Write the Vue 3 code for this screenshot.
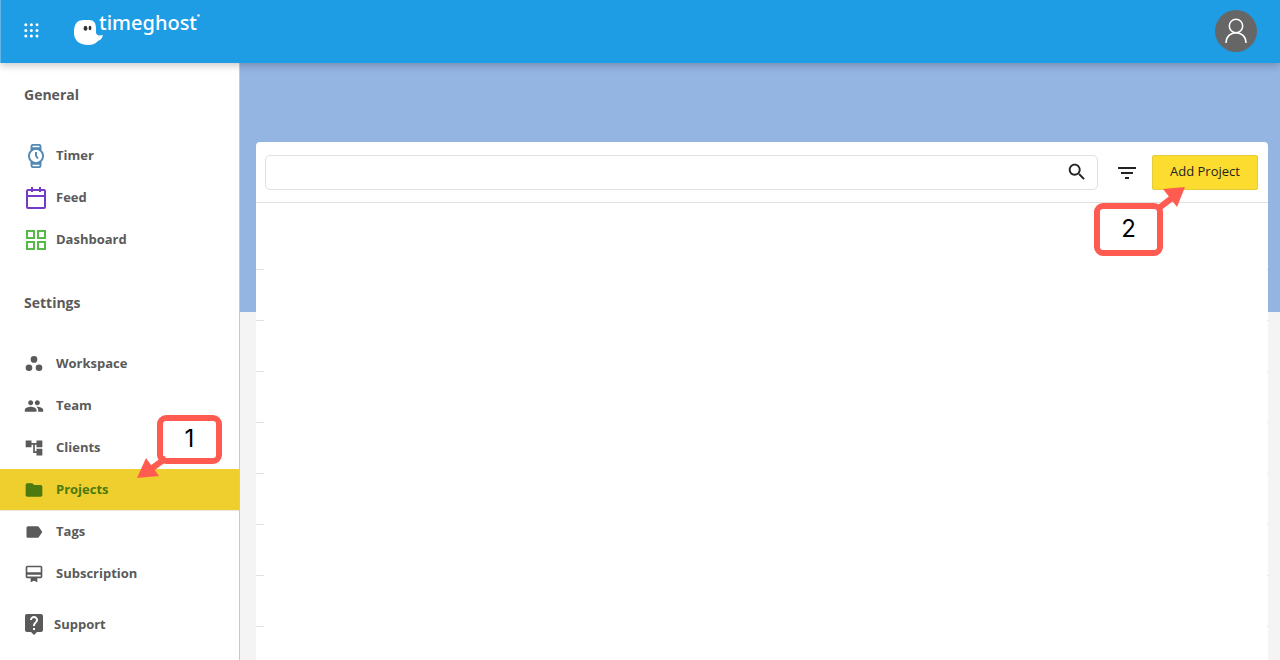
<script setup>
import { ref } from 'vue'

const query = ref('')

const general = [
  { label: 'Timer', icon: 'timer' },
  { label: 'Feed', icon: 'feed' },
  { label: 'Dashboard', icon: 'dashboard' },
]

const settings = [
  { label: 'Workspace', path: 'M12 2.5a4 4 0 1 0 0 8a4 4 0 1 0 0-8zM6 12.5a4 4 0 1 0 0 8a4 4 0 1 0 0-8zM18 12.5a4 4 0 1 0 0 8a4 4 0 1 0 0-8z' },
  { label: 'Team', path: 'M16 11c1.66 0 2.99-1.34 2.99-3S17.66 5 16 5c-1.66 0-3 1.34-3 3s1.34 3 3 3zm-8 0c1.66 0 2.99-1.34 2.99-3S9.66 5 8 5C6.34 5 5 6.34 5 8s1.34 3 3 3zm0 2c-2.33 0-7 1.17-7 3.5V19h14v-2.5c0-2.33-4.67-3.5-7-3.5zm8 0c-.29 0-.62.02-.97.05 1.16.84 1.97 1.97 1.97 3.45V19h6v-2.5c0-2.33-4.67-3.5-7-3.5z' },
  { label: 'Clients', path: 'M22 11V3h-7v3H9V3H2v8h7V8h2v10h4v3h7v-8h-7v3h-2V8h2v3z' },
  { label: 'Projects', active: true, path: 'M10 4H4c-1.1 0-1.99.9-1.99 2L2 18c0 1.1.9 2 2 2h16c1.1 0 2-.9 2-2V8c0-1.1-.9-2-2-2h-8l-2-2z' },
  { label: 'Tags', path: 'M17.63 5.84C17.27 5.33 16.67 5 16 5L5 5.01C3.9 5.01 3 5.9 3 7v10c0 1.1.9 1.99 2 1.99L16 19c.67 0 1.27-.33 1.63-.84L22 12l-4.37-6.16z' },
  { label: 'Subscription', path: 'M20 2H4c-1.11 0-2 .89-2 2v11c0 1.11.89 2 2 2h4v5l4-2 4 2v-5h4c1.11 0 2-.89 2-2V4c0-1.11-.89-2-2-2zm0 13H4v-2h16v2zm0-5H4V4h16v6z' },
]
</script>

<template>
  <div class="app">
    <header class="topbar">
      <button class="bare" type="button" aria-label="Apps">
        <svg width="15" height="15" viewBox="0 0 15 15" fill="#fff">
          <template v-for="r in 3" :key="r">
            <circle v-for="c in 3" :key="c" :cx="c * 5.6 - 3.8" :cy="r * 5.6 - 3.8" r="1.5" />
          </template>
        </svg>
      </button>
      <a class="brand" href="#">
        <svg class="ghost" width="30" height="27" viewBox="0 0 30 27">
          <path fill="#fff" d="M0 14C0 5 2.500 1 10 1H15C20 1 22 4 22 9V13C22 16 24 17 29 16C28 20 26 21 24 22C21 25 18 26 14 26C5 26 0 21 0 14Z" />
          <ellipse cx="11.500" cy="9.300" rx="1.900" ry="2.500" fill="#333" />
          <ellipse cx="16" cy="9" rx="1.400" ry="2.200" fill="#333" />
        </svg>
        <span class="wordmark">timeghost</span>
        <svg class="mark" width="3" height="3" viewBox="0 0 3 3"><circle cx="1.500" cy="1.500" r="1.200" fill="#fff" /></svg>
      </a>
      <button class="avatar" type="button" aria-label="Account">
        <svg width="24" height="26" viewBox="0 0 24 26" fill="none" stroke="#fff" stroke-width="1.500">
          <circle cx="12" cy="8" r="6.700" />
          <path d="M2 25C2 18.500 6.500 14.700 12 14.700S22 18.500 22 25" />
        </svg>
      </button>
    </header>

    <div class="body">
      <nav class="sidebar">
        <h2>General</h2>
        <ul>
          <li v-for="item in general" :key="item.label">
            <a class="item big" href="#">
              <svg v-if="item.icon === 'timer'" width="24" height="24" viewBox="0 0 24 24" fill="none" stroke="#5289b5" stroke-width="1.900">
                <circle cx="12" cy="12" r="7.100" />
                <path d="M7.500 6V2.500Q7.500 .9 9 .9H15Q16.500 .9 16.500 2.500V6M7.500 18V21.500Q7.500 23.100 9 23.100H15Q16.500 23.100 16.500 21.500V18M8 4.200H16M8 19.800H16" />
                <path d="M12 8V12L14 14.500" />
              </svg>
              <svg v-else-if="item.icon === 'feed'" width="24" height="24" viewBox="0 0 24 24" fill="none" stroke="#743bc7" stroke-width="2">
                <rect x="3" y="4" width="18" height="18" rx="1" />
                <path d="M3 10H21M8 1V6M16 1V6" />
              </svg>
              <svg v-else width="24" height="24" viewBox="0 0 24 24" fill="none" stroke="#56b947" stroke-width="2">
                <rect x="3" y="3" width="7" height="7" />
                <rect x="14" y="3" width="7" height="7" />
                <rect x="3" y="14" width="7" height="7" />
                <rect x="14" y="14" width="7" height="7" />
              </svg>
              <span>{{ item.label }}</span>
            </a>
          </li>
        </ul>
        <h2 class="second">Settings</h2>
        <ul>
          <li v-for="item in settings" :key="item.label">
            <a class="item small" :class="{ active: item.active }" href="#">
              <svg width="20" height="20" viewBox="0 0 24 24" fill="currentColor"><path :d="item.path" /></svg>
              <span>{{ item.label }}</span>
            </a>
            <div v-if="item.active" class="callout one">
              <span>1</span>
              <svg class="arrow" width="32" height="26" viewBox="0 0 32 26">
                <path d="M29 2L14 13" stroke="#ff5b50" stroke-width="6" />
                <path d="M0 22L9 2L22 20Z" fill="#ff5b50" />
              </svg>
            </div>
          </li>
        </ul>
        <a class="item support" href="#">
          <svg width="24" height="24" viewBox="0 0 24 24" fill="currentColor"><path d="M19 2H5c-1.110 0-2 .9-2 2v14c0 1.100.89 2 2 2h4l3 3 3-3h4c1.100 0 2-.9 2-2V4c0-1.100-.9-2-2-2zm-6 16h-2v-2h2v2zm2.070-7.750l-.9.920C13.450 11.900 13 12.500 13 14h-2v-.5c0-1.100.45-2.100 1.170-2.830l1.240-1.260c.37-.36.59-.86.59-1.410 0-1.100-.9-2-2-2s-2 .9-2 2H8c0-2.210 1.790-4 4-4s4 1.790 4 4c0 .88-.36 1.680-.93 2.250z" /></svg>
          <span>Support</span>
        </a>
      </nav>

      <main class="content">
        <section class="card">
          <form class="toolbar" @submit.prevent>
            <div class="search">
              <input v-model="query" type="text" aria-label="Search projects" />
              <button class="bare" type="submit" aria-label="Search">
                <svg width="22" height="22" viewBox="0 0 24 24" fill="#222"><path d="M15.500 14h-.79l-.28-.27C15.410 12.590 16 11.110 16 9.500 16 5.910 13.090 3 9.500 3S3 5.910 3 9.500 5.910 16 9.500 16c1.610 0 3.090-.59 4.230-1.570l.27.28v.79l5 4.990L20.490 19l-4.990-5zm-6 0C7.010 14 5 11.990 5 9.500S7.010 5 9.500 5 14 7.010 14 9.500 11.990 14 9.500 14z" /></svg>
              </button>
            </div>
            <button class="bare" type="button" aria-label="Filter">
              <svg width="24" height="24" viewBox="0 0 24 24" fill="#222"><path d="M10 19h4v-2h-4v2zM3 7v2h18V7H3zm3 7h12v-2H6v2z" /></svg>
            </button>
            <div class="add-wrap">
              <button class="add" type="button">Add Project</button>
              <div class="callout two">
                <span>2</span>
                <svg class="arrow" width="30" height="24" viewBox="0 0 30 24">
                  <path d="M2 22L15 12" stroke="#ff5b50" stroke-width="6" />
                  <path d="M28 1L6 3L20 21Z" fill="#ff5b50" />
                </svg>
              </div>
            </div>
          </form>
          <ul class="rows">
            <li v-for="n in 9" :key="n"></li>
          </ul>
        </section>
      </main>
    </div>
  </div>
</template>

<style>
body {
  overflow: hidden;
}
</style>

<style scoped>
* {
  box-sizing: border-box;
}
.app {
  height: 100vh;
  display: flex;
  flex-direction: column;
  overflow: hidden;
  font-family: "Open Sans", "Noto Sans", sans-serif;
  font-size: 13px;
  color: #5a5a5a;
}
button {
  font: inherit;
  cursor: pointer;
}
.bare {
  display: flex;
  padding: 0;
  border: 0;
  background: none;
}
a {
  color: inherit;
  text-decoration: none;
}
ul {
  list-style: none;
  margin: 0;
  padding: 0;
}
.topbar {
  flex: none;
  height: 63px;
  display: flex;
  align-items: center;
  padding: 0 23px 2px;
  background: #1e9ce4;
  border-left: 1px solid #62b5e8;
  box-shadow: 0 2px 8px rgba(0, 0, 0, 0.24);
  position: relative;
  z-index: 2;
}
.brand {
  display: flex;
  align-items: flex-start;
  height: 43px;
  margin-left: 35px;
  color: #fff;
}
.ghost {
  margin-top: 10px;
}
.wordmark {
  margin-left: -5px;
  font-family: "Noto Sans", "Open Sans", sans-serif;
  font-size: 20px;
  line-height: 27px;
  font-weight: 500;
}
.mark {
  margin-top: 5px;
}
.avatar {
  margin-left: auto;
  width: 42px;
  height: 42px;
  padding: 0;
  border: 0;
  border-radius: 50%;
  background: #666;
  display: flex;
  align-items: center;
  justify-content: center;
}
.body {
  flex: 1;
  display: flex;
  min-height: 0;
}
.sidebar {
  flex: none;
  width: 240px;
  background: #fff;
  border-right: 1px solid #c9c9c9;
  z-index: 1;
}
h2 {
  margin: 0;
  padding-left: 24px;
  font-size: 14px;
  line-height: 63px;
  font-weight: 700;
}
.sidebar ul {
  padding-top: 8px;
}
.second {
  margin-top: 11px;
  padding-bottom: 1px;
}
.sidebar li {
  position: relative;
}
.item {
  height: 42px;
  display: flex;
  align-items: center;
  gap: 12px;
  padding-left: 24px;
  font-weight: 700;
}
.big {
  gap: 8px;
}
.big svg {
  margin-top: 2px;
}
.item span {
  padding-bottom: 1px;
}
.small span {
  padding-bottom: 3px;
}
.active {
  background: #eecf2d;
  box-shadow: inset 0 -1px #e8e8e8;
  color: #4b7a0f;
}
.support {
  margin-top: 8px;
  padding-left: 22px;
  gap: 8px;
}
.content {
  flex: 1;
  min-width: 0;
  display: flex;
  padding: 79px 12px 0 16px;
  background: linear-gradient(#94b4e2, #94b4e2) top / 100% 249px no-repeat #f4f4f4;
}
.card {
  flex: 1;
  background: #fff;
  border-radius: 4px 4px 0 0;
}
.toolbar {
  display: flex;
  align-items: center;
  height: 61px;
  padding: 0 10px 0 9px;
  border-bottom: 1px solid #e0e0e0;
}
.search {
  flex: 1;
  display: flex;
  align-items: center;
  height: 35px;
  margin-right: 17px;
  padding-right: 9px;
  border: 1px solid #e0e0e0;
  border-radius: 5px;
}
.search input {
  flex: 1;
  min-width: 0;
  height: 100%;
  padding: 0 12px;
  border: 0;
  outline: 0;
  background: transparent;
  font: inherit;
}
.add-wrap {
  position: relative;
  margin-left: 13px;
}
.add {
  display: block;
  width: 106px;
  height: 35px;
  padding: 0 0 3px;
  border: 1px solid #e6cb3a;
  border-radius: 2px;
  background: #fddc30;
  color: #222;
  font-weight: 500;
}
.rows li {
  height: 51px;
  border: solid #e0e0e0;
  border-width: 0 0 1px;
  border-image: linear-gradient(to right, #e0e0e0 9px, transparent 9px, transparent calc(100% - 2px), #e0e0e0 calc(100% - 2px)) 1;
}
.rows li:first-child {
  height: 67px;
}
.callout {
  position: absolute;
  z-index: 3;
  display: flex;
  align-items: center;
  justify-content: center;
  padding-bottom: 2px;
  border: 6px solid #ff5b50;
  border-radius: 9px;
  background: #fff;
  color: #000;
  font: 24px Inter, sans-serif;
}
.one {
  left: 157px;
  top: -54px;
  width: 65px;
  height: 49px;
}
.two {
  right: 95px;
  top: 48px;
  width: 69px;
  height: 53px;
}
.arrow {
  position: absolute;
}
.one .arrow {
  left: -26px;
  top: 35px;
}
.two .arrow {
  left: 57px;
  top: -23px;
}
</style>
